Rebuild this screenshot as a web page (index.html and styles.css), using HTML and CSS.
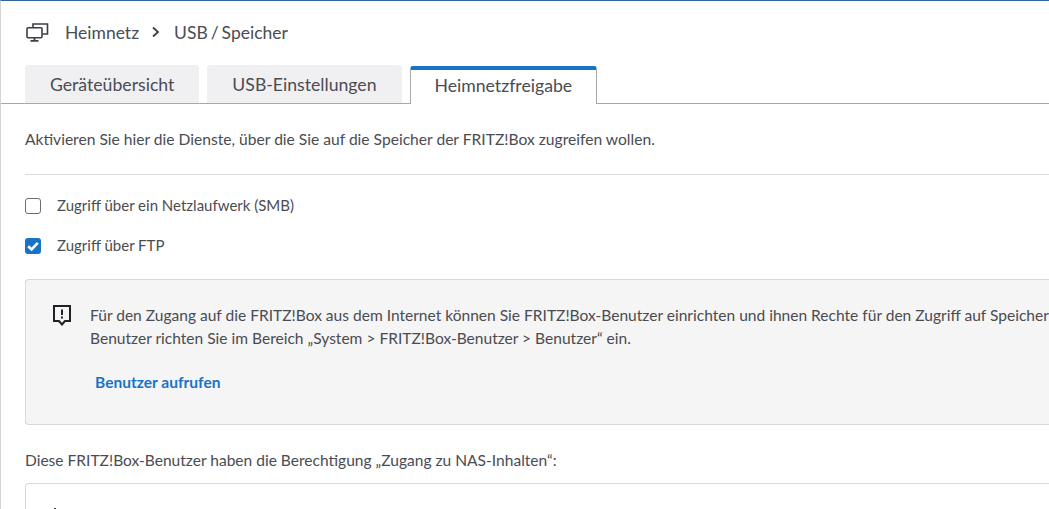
FILE: index.html
```html
<!DOCTYPE html>
<html lang="de">
<head>
<meta charset="utf-8">
<title>USB / Speicher</title>
<link rel="stylesheet" href="styles.css">
</head>
<body>
<div class="page">
  <header class="crumbs">
    <svg class="crumb-icon" width="23" height="19" viewBox="0 0 23 19" fill="none" stroke="#3c3f46" stroke-width="1.6">
      <path d="M7 4.5V1H21.5V11H16.5"/>
      <rect x="1" y="4.8" width="15" height="10" rx="1"/>
      <path d="M8.5 14.8V17.5M4.5 17.8H12.5" stroke-width="1.8"/>
    </svg>
    <span class="crumb">Heimnetz</span>
    <svg class="crumb-sep" width="10" height="12" viewBox="0 0 10 12" fill="none" stroke="#3c3f46" stroke-width="1.8"><path d="M2 1.5L7 6L2 10.5"/></svg>
    <span class="crumb">USB / Speicher</span>
  </header>
  <nav class="tabs">
    <a class="tab">Geräteübersicht</a>
    <a class="tab">USB-Einstellungen</a>
    <a class="tab tab-active">Heimnetzfreigabe</a>
  </nav>
  <main class="content">
    <p class="intro">Aktivieren Sie hier die Dienste, über die Sie auf die Speicher der FRITZ!Box zugreifen wollen.</p>
    <hr class="rule">
    <label class="check"><span class="box"></span><span class="check-text">Zugriff über ein Netzlaufwerk (SMB)</span></label>
    <label class="check"><span class="box box-on"><svg width="16" height="16" viewBox="0 0 16 16" fill="none" stroke="#fff" stroke-width="2.6"><path d="M3.2 8.2L6.6 11.4L12.8 4.8"/></svg></span><span class="check-text">Zugriff über FTP</span></label>
    <section class="note">
      <svg class="note-icon" width="20" height="22" viewBox="0 0 20 22" fill="none" stroke="#1f2127" stroke-width="2">
        <path d="M2 2H18V17H13L10 20.5L7 17H2Z"/>
        <path d="M10 5.5V11M10 12.6V14.6"/>
      </svg>
      <div class="note-body">
        <p class="note-text">Für den Zugang auf die FRITZ!Box aus dem Internet können Sie FRITZ!Box-Benutzer einrichten und ihnen Rechte für den Zugriff auf Speicher<br>Benutzer richten Sie im Bereich „System &gt; FRITZ!Box-Benutzer &gt; Benutzer“ ein.</p>
        <a class="note-link">Benutzer aufrufen</a>
      </div>
    </section>
    <p class="users-label">Diese FRITZ!Box-Benutzer haben die Berechtigung „Zugang zu NAS-Inhalten“:</p>
    <section class="users"><span class="users-mark"></span></section>
  </main>
</div>
</body>
</html>
```

FILE: styles.css
```css
html, body {
  margin: 0;
  height: 509px;
  overflow: hidden;
  background: #fff;
}
.page {
  box-sizing: border-box;
  width: 1049px;
  height: 509px;
  overflow: hidden;
  border-top: 1px solid #2f6796;
  border-left: 1px solid #d4d4d4;
  font-family: "Lato", "Open Sans", sans-serif;
  font-size: 15.55px;
  color: #4a4c52;
}
.crumbs {
  box-sizing: border-box;
  display: flex;
  align-items: center;
  height: 64px;
  padding: 0 0 2px 25px;
  font-size: 17.5px;
  word-spacing: -1.5px;
}
.crumb-icon { margin-right: 16px; }
.crumb-sep { margin: 0 13px 0 12px; }
.tabs {
  display: flex;
  gap: 8px;
  height: 38px;
  padding-left: 24px;
  border-bottom: 1px solid #a8a8a8;
}
.tab {
  box-sizing: border-box;
  display: flex;
  align-items: center;
  justify-content: center;
  height: 38px;
  padding: 0 25px;
  background: #f0f0f2;
  border-radius: 3px 3px 0 0;
  font-size: 17.65px;
}
.tab-active {
  height: 38px;
  margin-top: 1px;
  background: #fff;
  border: 1px solid #a8a8a8;
  border-top: 4px solid #1872c8;
  border-bottom: 0;
  padding: 0 24px 3px;
}
.content { padding: 0 0 0 24px; }
.intro { margin: 25px 0 25px; line-height: 20px; font-size: 15.62px; }
.rule { margin: 0 0 21px; border: 0; border-top: 1px solid #dcdcdc; }
.check {
  display: flex;
  align-items: center;
  gap: 16px;
  height: 20px;
  margin-bottom: 20px;
  font-size: 15px;
}
.check-text { margin-bottom: 2px; }
.box {
  box-sizing: border-box;
  display: block;
  width: 16px;
  height: 16px;
  border: 1px solid #6e6e6e;
  border-radius: 3px;
}
.box-on { background: #1872c8; border: 0; }
.box-on svg { display: block; }
.note {
  display: flex;
  gap: 18px;
  box-sizing: border-box;
  height: 146px;
  margin-top: 23px;
  padding: 24px 0 0 26px;
  background: #f5f5f5;
  border: 1px solid #d8d8d8;
  border-right: 0;
  border-radius: 4px 0 0 4px;
}
.note-text { margin: 0; line-height: 23px; white-space: nowrap; }
.note-link {
  display: block;
  margin: 22px 0 0 5px;
  line-height: 20px;
  font-weight: 700;
  color: #1872c8;
}
.users-label { margin: 25px 0 13px; line-height: 20px; }
.users {
  box-sizing: border-box;
  height: 26px;
  padding: 24px 0 0 28px;
  border: 1px solid #d8d8d8;
  border-width: 1px 0 0 1px;
  border-radius: 4px 0 0 0;
}
.users-mark {
  display: block;
  width: 2px;
  height: 1px;
  background: #3c3f46;
}
```
